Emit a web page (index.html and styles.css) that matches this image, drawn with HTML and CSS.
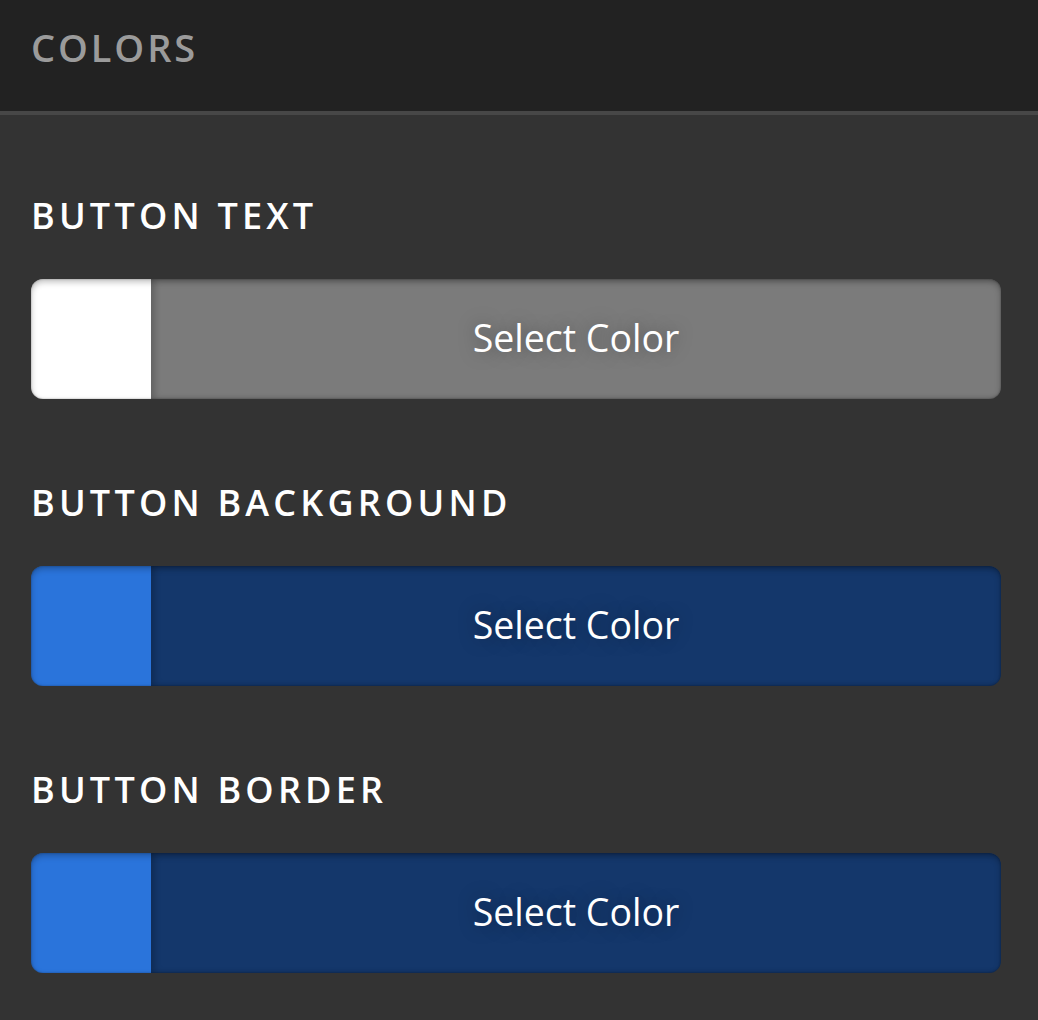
FILE: index.html
```html
<!DOCTYPE html>
<html>
<head>
<meta charset="utf-8">
<link rel="stylesheet" href="styles.css">
</head>
<body>
<header class="panel-header">
  <h1 class="panel-title">COLORS</h1>
</header>
<main class="panel-body">
  <section class="field">
    <h2 class="field-label">BUTTON TEXT</h2>
    <div class="picker">
      <div class="swatch swatch-white"></div>
      <button class="select-btn btn-gray">Select Color</button>
    </div>
  </section>
  <section class="field">
    <h2 class="field-label">BUTTON BACKGROUND</h2>
    <div class="picker">
      <div class="swatch swatch-blue"></div>
      <button class="select-btn btn-blue">Select Color</button>
    </div>
  </section>
  <section class="field">
    <h2 class="field-label">BUTTON BORDER</h2>
    <div class="picker">
      <div class="swatch swatch-blue"></div>
      <button class="select-btn btn-blue">Select Color</button>
    </div>
  </section>
</main>
</body>
</html>
```

FILE: styles.css
```css
* { box-sizing: border-box; }
html, body {
  margin: 0;
  padding: 0;
  background: #333333;
  font-family: "Open Sans", "Noto Sans", sans-serif;
}
.panel-header {
  background: #222222;
  height: 115px;
  border-bottom: 4px solid #474747;
  padding: 28px 31px 0;
}
.panel-title {
  margin: 0;
  font-size: 38px;
  line-height: 38px;
  font-weight: 600;
  letter-spacing: 2.9px;
  color: #9b9b9b;
}
.panel-body {
  display: flex;
  flex-direction: column;
  gap: 86px;
  padding: 83px 37px 0 31px;
}
.field {
  display: flex;
  flex-direction: column;
  gap: 45px;
}
.field-label {
  margin: 0;
  font-size: 36px;
  line-height: 36px;
  font-weight: 600;
  letter-spacing: 4.2px;
  color: #ffffff;
}
.picker {
  display: flex;
  height: 120px;
  border-radius: 12px;
  overflow: hidden;
  position: relative;
}
.picker::after {
  content: "";
  position: absolute;
  inset: 0;
  border-radius: 12px;
  box-shadow: inset 0 3px 6px rgba(0,0,0,0.25), inset 0 0 2px rgba(0,0,0,0.35);
  pointer-events: none;
}
.swatch {
  width: 120px;
  flex: none;
}
.swatch-white { background: #ffffff; }
.swatch-blue { background: #2a74db; }
.select-btn {
  flex: 1;
  border: 0;
  margin: 0;
  padding: 0 0 3px;
  font-family: "Open Sans", "Noto Sans", sans-serif;
  font-size: 37.5px;
  color: #ffffff;
  text-shadow: 0 0 18px rgba(0,0,0,0.35);
  box-shadow: inset 4px 0 6px rgba(0,0,0,0.2);
  cursor: pointer;
}
.btn-gray { background: #7b7b7b; }
.btn-blue { background: #14376b; }
```
